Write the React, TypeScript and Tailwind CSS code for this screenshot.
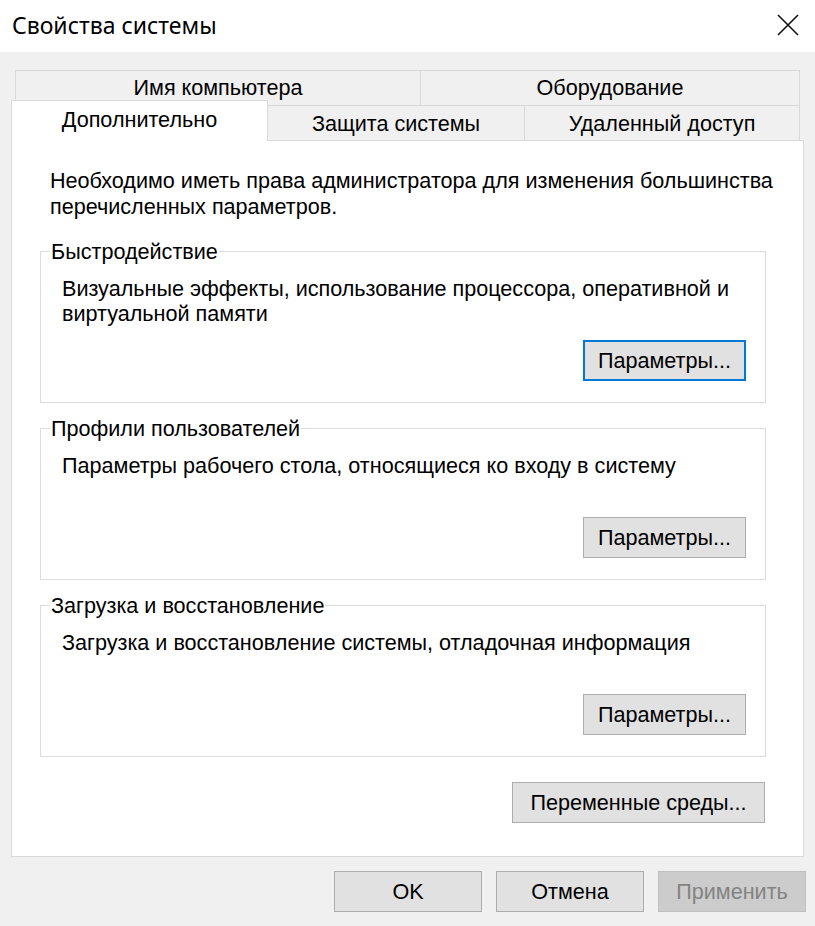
import React from "react";

const F = { fontFamily: '"Liberation Sans", Arial, sans-serif' };

function Btn({ children, w, focused, disabled }: { children: React.ReactNode; w: string; focused?: boolean; disabled?: boolean }) {
  const base = "h-[41px] flex items-center justify-center text-[21.6px] leading-none";
  if (disabled)
    return <div className={`${base} ${w} bg-[#cccccc] border border-[#bfbfbf] text-[#838383]`}>{children}</div>;
  if (focused)
    return <div className={`${base} ${w} bg-[#e1e1e1] border-2 border-[#0078d7] text-black`}>{children}</div>;
  return <div className={`${base} ${w} bg-[#e1e1e1] border border-[#adadad] text-black`}>{children}</div>;
}

function Group({ label, children, focused }: { label: string; children: React.ReactNode; focused?: boolean }) {
  return (
    <fieldset className="border border-[#dcdcdc] px-[21px] pb-[21px] m-0 min-w-0">
      <legend className="ml-[-12px] px-[1px] text-[21.6px] leading-[23px] text-black">{label}</legend>
      <div className="pt-[13px] text-[21.6px] leading-[25px] text-black h-[77px]">{children}</div>
      <div className="flex justify-end mr-[-2px]">
        <Btn w="w-[163px]" focused={focused}>Параметры...</Btn>
      </div>
    </fieldset>
  );
}

export default function App() {
  return (
    <div className="w-[815px] h-[926px] bg-[#f0f0f0] flex flex-col overflow-hidden" style={F}>
      <div className="h-[52px] bg-white flex items-center justify-between pl-[12px] pr-[16px]">
        <span className="text-[23px] text-black mt-[-2px]" style={{ fontFamily: '"Noto Sans", "Open Sans", sans-serif' }}>
          Свойства системы
        </span>
        <svg width="22" height="22" viewBox="0 0 22 22" className="mt-[-2px]">
          <path d="M1 1 L21 21 M21 1 L1 21" stroke="#111" strokeWidth="1.6" fill="none" />
        </svg>
      </div>

      <div className="pl-[11px] pr-[11px] pt-[18px]">
        <div className="flex h-[35px] ml-[4px] mr-[4px] text-[21.6px] text-black">
          <div className="w-[405px] border-t border-l border-[#d9d9d9] flex items-center justify-center">Имя компьютера</div>
          <div className="flex-1 border-t border-l border-r border-[#d9d9d9] flex items-center justify-center">Оборудование</div>
        </div>
        <div className="flex h-[35px] mr-[4px] text-[21.6px] text-black">
          <div className="relative z-10 w-[257px] h-[41px] -mt-[5px] bg-white border border-b-0 border-[#d9d9d9] flex items-start justify-center pt-[3px]">
            Дополнительно
          </div>
          <div className="w-[256px] border-t border-[#d9d9d9] flex items-center justify-center pt-[2px]">Защита системы</div>
          <div className="flex-1 border-t border-l border-r border-[#d9d9d9] flex items-center justify-center pt-[2px]">Удаленный доступ</div>
        </div>
        <div className="h-[717px] bg-white border border-[#d9d9d9] pl-[28px] pr-[37px] pt-[27px] flex flex-col">
          <p className="pl-[10px] mr-[-16px] text-[21.6px] leading-[26px] text-black">
            Необходимо иметь права администратора для изменения большинства перечисленных параметров.
          </p>
          <div className="mt-[20px] flex flex-col gap-[14px]">
            <Group label="Быстродействие" focused>
              Визуальные эффекты, использование процессора, оперативной и виртуальной памяти
            </Group>
            <Group label="Профили пользователей">
              Параметры рабочего стола, относящиеся ко входу в систему
            </Group>
            <Group label="Загрузка и восстановление">
              Загрузка и восстановление системы, отладочная информация
            </Group>
          </div>
          <div className="flex justify-end mt-[25px] mr-[1px]">
            <Btn w="w-[253px]">Переменные среды...</Btn>
          </div>
        </div>
      </div>

      <div className="flex justify-end gap-[14px] pr-[9px] mt-[14px]">
        <Btn w="w-[148px]">OK</Btn>
        <Btn w="w-[148px]">Отмена</Btn>
        <Btn w="w-[148px]" disabled>Применить</Btn>
      </div>
    </div>
  );
}
